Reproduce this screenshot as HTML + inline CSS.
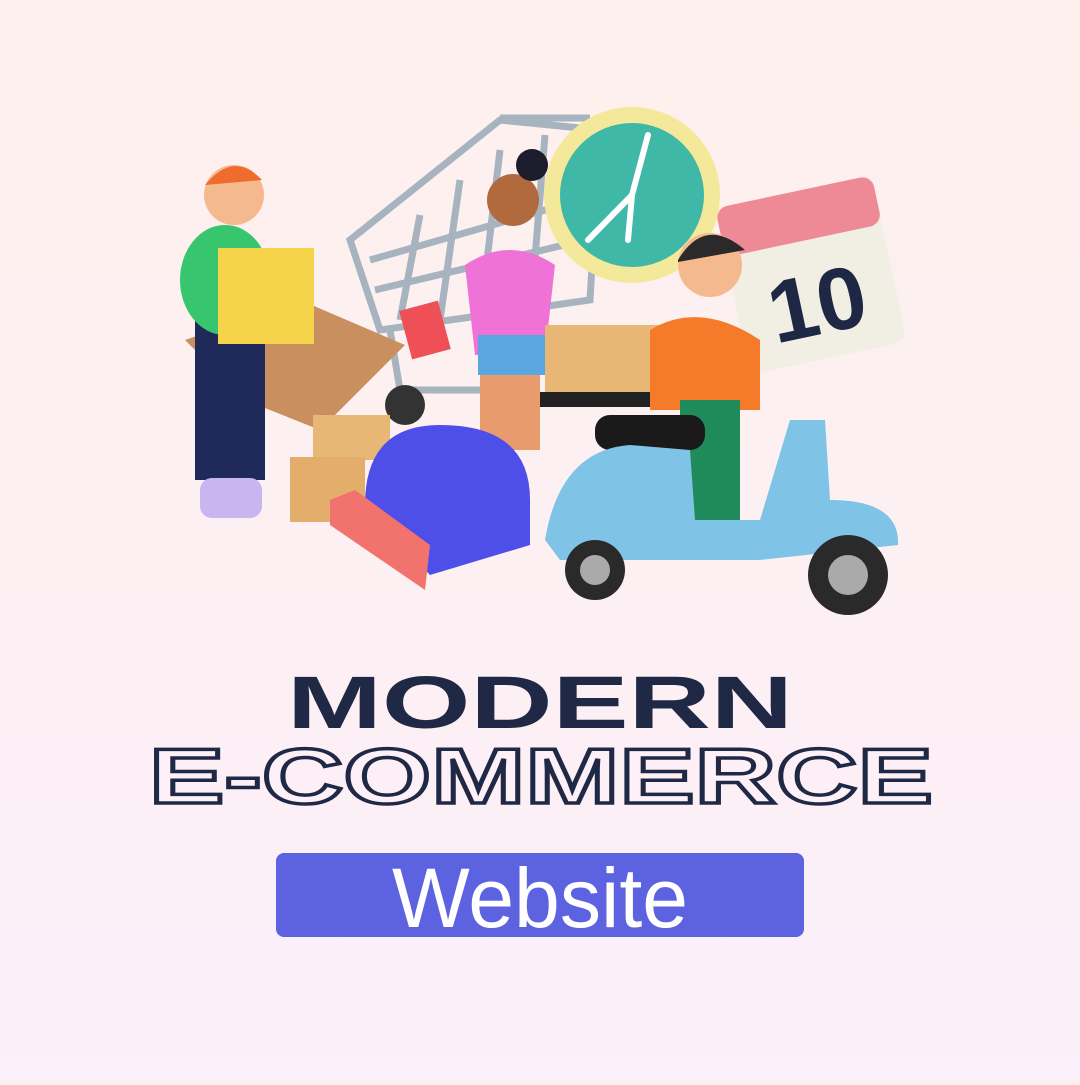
<!DOCTYPE html>
<html><head><meta charset="utf-8"><style>
html,body{margin:0;padding:0}
body{width:1080px;height:1080px;overflow:hidden;background:linear-gradient(180deg,#fdf0ec 0%,#fcf0f4 60%,#fbf0fb 100%)}
</style></head><body>
<svg width="1080" height="1080" viewBox="0 0 1080 1080" xmlns="http://www.w3.org/2000/svg">
<!-- cart -->
<g stroke="#a8b3c0" stroke-width="7" fill="none">
<path d="M500 118 L590 118 M350 240 L500 120 L600 130 L590 300 L380 330 Z"/>
<path d="M370 260 L580 200 M375 290 L585 240 M420 215 L400 320 M460 180 L440 320 M500 150 L480 320 M545 135 L530 320"/>
<path d="M390 330 L400 390 L520 390"/>
</g>
<circle cx="405" cy="405" r="20" fill="#333"/>
<circle cx="510" cy="405" r="16" fill="#333"/>
<!-- clock -->
<circle cx="632" cy="195" r="88" fill="#f4e99a"/>
<circle cx="632" cy="195" r="72" fill="#3fb8a8"/>
<path d="M632 195 L588 240 M632 195 L628 240 M632 195 L648 135" stroke="#fff" stroke-width="6" stroke-linecap="round"/>
<!-- calendar -->
<g transform="rotate(-12 810 270)">
<rect x="730" y="190" width="160" height="170" rx="12" fill="#f1efe4"/>
<rect x="730" y="190" width="160" height="50" rx="12" fill="#ee8a96"/>
<text x="810" y="335" font-family="Liberation Sans,sans-serif" font-weight="bold" font-size="88" fill="#1e2845" text-anchor="middle">10</text>
</g>
<!-- boxes left -->
<path d="M185 340 L300 300 L405 345 L320 430 L245 400 Z" fill="#c98f5e"/>
<rect x="313" y="415" width="77" height="45" fill="#e9b775"/>
<rect x="290" y="457" width="75" height="65" fill="#e3ad6c"/>
<!-- man left -->
<rect x="195" y="320" width="70" height="160" fill="#1f2a5a"/>
<ellipse cx="225" cy="280" rx="45" ry="55" fill="#37c56d"/>
<circle cx="234" cy="195" r="30" fill="#f5b98f"/>
<path d="M205 185 Q234 150 262 180 L205 185Z" fill="#f06b2e"/>
<rect x="218" y="248" width="96" height="96" fill="#f5d44c"/>
<rect x="200" y="478" width="62" height="40" rx="12" fill="#c9b6f0"/>
<!-- woman -->
<rect x="480" y="360" width="60" height="90" fill="#e89b6c"/>
<path d="M465 265 Q510 235 555 265 L545 355 L475 355 Z" fill="#ef72d7"/>
<rect x="478" y="335" width="68" height="40" fill="#5aa6e0"/>
<circle cx="513" cy="200" r="26" fill="#b06a3e"/>
<circle cx="532" cy="165" r="16" fill="#1c1c2c"/>
<rect x="405" y="305" width="40" height="50" fill="#ef4f57" transform="rotate(-15 425 330)"/>
<!-- scooter parcel -->
<rect x="545" y="325" width="115" height="70" fill="#e9b775"/>
<rect x="540" y="392" width="110" height="15" fill="#222"/>
<!-- mailbox -->
<path d="M365 505 Q365 425 440 425 Q530 425 530 500 L530 545 L430 575 Z" fill="#4d4fe8"/>
<path d="M330 500 L355 490 L430 545 L425 590 L330 525 Z" fill="#f2726e"/>
<!-- rider -->
<circle cx="710" cy="265" r="32" fill="#f5b98f"/>
<path d="M678 260 Q705 215 745 250 L678 262Z" fill="#2a2a2a"/>
<path d="M650 330 Q700 300 760 340 L760 410 L650 410 Z" fill="#f57a29"/>
<rect x="680" y="400" width="60" height="125" fill="#1f8a5a"/>
<!-- scooter -->
<rect x="595" y="415" width="110" height="35" rx="15" fill="#1a1a1a"/>
<path d="M545 540 Q560 450 630 445 L690 450 L695 520 L760 520 L790 420 L825 420 L830 500 Q900 500 898 545 L760 560 L560 560 Z" fill="#7fc3e6"/>
<circle cx="595" cy="570" r="30" fill="#2a2a2a"/><circle cx="595" cy="570" r="15" fill="#aaa"/>
<circle cx="848" cy="575" r="40" fill="#2a2a2a"/><circle cx="848" cy="575" r="20" fill="#aaa"/>
<!-- text -->
<text x="287" y="728" textLength="506" lengthAdjust="spacingAndGlyphs" font-family="Liberation Sans,sans-serif" font-weight="bold" font-size="74" fill="#1f2844">MODERN</text>
<text x="149" y="803" textLength="784" lengthAdjust="spacingAndGlyphs" font-family="Liberation Sans,sans-serif" font-weight="bold" font-size="78" fill="#fdf0f6" stroke="#1f2844" stroke-width="3.5">E-COMMERCE</text>
<rect x="276" y="853" width="528" height="84" rx="8" fill="#5d63e0"/>
<text x="392" y="927" textLength="296" lengthAdjust="spacingAndGlyphs" font-family="Liberation Sans,sans-serif" font-size="84" fill="#fff">Website</text>
</svg>
</body></html>
